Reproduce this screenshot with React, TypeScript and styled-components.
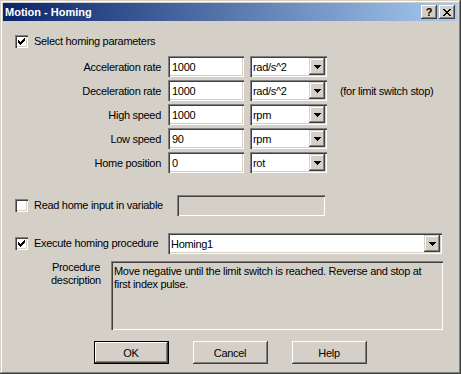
import React from 'react';
import styled, { createGlobalStyle } from 'styled-components';

const Global = createGlobalStyle`
  html, body { margin: 0; padding: 0; background: #D4D0C8; }
  body { font-family: "Liberation Sans", Arial, sans-serif; font-size: 11px; letter-spacing: -0.3px; color: #000; }
`;

const sunken = `box-shadow: inset 1px 1px #808080, inset 2px 2px #404040, inset -1px -1px #FFFFFF, inset -2px -2px #D4D0C8;`;
const raised = `box-shadow: inset -1px -1px #404040, inset 1px 1px #D4D0C8, inset -2px -2px #808080, inset 2px 2px #FFFFFF;`;

const Window = styled.div`
  box-sizing: border-box;
  width: 461px;
  height: 374px;
  padding: 3px 4px 4px 3px;
  background: #D4D0C8;
  ${raised}
  display: flex;
  flex-direction: column;
`;

const TitleBar = styled.div`
  height: 18px;
  display: flex;
  align-items: center;
  justify-content: space-between;
  background: linear-gradient(to right, #0A246A, #A6CAF0);
  padding: 0 2px 0 2px;
`;

const Title = styled.span`
  color: #fff;
  font-weight: bold;
  font-size: 11px;
  letter-spacing: 0;
  line-height: 13px;
`;

const CaptionButtons = styled.div`
  display: flex;
  gap: 2px;
`;

const CaptionButton = styled.div`
  box-sizing: border-box;
  width: 16px;
  height: 14px;
  background: #D4D0C8;
  box-shadow: inset -1px -1px #404040, inset 1px 1px #FFFFFF, inset -2px -2px #808080, inset 2px 2px #D4D0C8;
  display: flex;
  align-items: center;
  justify-content: center;
  font-weight: bold;
  font-size: 11px;
  line-height: 11px;
`;

const Client = styled.div`
  flex: 1;
  display: flex;
  flex-direction: column;
  padding: 0 12px;
`;

const CheckRow = styled.div<{ $top: number }>`
  display: flex;
  align-items: center;
  margin-top: ${p => p.$top}px;
  min-height: 13px;
`;

const Box = styled.span`
  box-sizing: border-box;
  width: 13px;
  height: 13px;
  flex: none;
  background: #fff;
  ${sunken}
  display: block;
`;

const CheckLabel = styled.span<{ $width?: number }>`
  margin-left: 6px;
  line-height: 13px;
  white-space: nowrap;
  ${p => (p.$width ? `width: ${p.$width}px; flex: none;` : '')}
`;

const ParamGrid = styled.div`
  display: grid;
  grid-template-columns: 153px 82px 90px 1fr;
  grid-auto-rows: 21px;
  row-gap: 3px;
  margin-top: 8px;
  align-items: center;
`;

const ParamLabel = styled.span`
  text-align: right;
  padding-right: 7px;
  white-space: nowrap;
`;

const TextBox = styled.div<{ $width: number; $disabled?: boolean }>`
  box-sizing: border-box;
  width: ${p => p.$width}px;
  height: 21px;
  background: ${p => (p.$disabled ? '#D4D0C8' : '#FFFFFF')};
  ${sunken}
  padding: 2px 2px 2px 4px;
  display: flex;
  align-items: center;
  white-space: nowrap;
`;

const Combo = styled.div<{ $width: number }>`
  box-sizing: border-box;
  width: ${p => p.$width}px;
  height: 21px;
  background: #fff;
  ${sunken}
  padding: 2px;
  display: flex;
  align-items: center;
`;

const ComboText = styled.span`
  flex: 1;
  padding-left: 1px;
  white-space: nowrap;
`;

const ArrowButton = styled.span`
  box-sizing: border-box;
  width: 16px;
  height: 17px;
  flex: none;
  background: #D4D0C8;
  ${raised}
  display: flex;
  align-items: center;
  justify-content: center;
`;

const Note = styled.span`
  white-space: nowrap;
`;

const DescRow = styled.div`
  display: flex;
  align-items: flex-start;
  margin-top: 7px;
  padding-left: 26px;
`;

const DescLabel = styled.span`
  width: 70px;
  flex: none;
  text-align: center;
  line-height: 13px;
`;

const DescBox = styled.div`
  box-sizing: border-box;
  width: 332px;
  height: 69px;
  background: #D4D0C8;
  ${sunken}
  padding: 4px 3px;
  line-height: 13px;
`;

const ButtonRow = styled.div`
  display: flex;
  justify-content: center;
  gap: 24px;
  margin-top: 11px;
`;

const PushButton = styled.div<{ $default?: boolean }>`
  box-sizing: border-box;
  width: 75px;
  height: 23px;
  background: #D4D0C8;
  display: flex;
  align-items: center;
  justify-content: center;
  ${p =>
    p.$default
      ? 'box-shadow: inset 0 0 0 1px #000000, inset -2px -2px #404040, inset 2px 2px #FFFFFF, inset -3px -3px #808080;'
      : 'box-shadow: inset -1px -1px #404040, inset 1px 1px #FFFFFF, inset -2px -2px #808080, inset 2px 2px #D4D0C8;'}
`;

const Tick = () => (
  <svg width="13" height="13" viewBox="0 0 13 13" shapeRendering="crispEdges" style={{ display: 'block' }}>
    <path
      d="M3 5h1v3h-1zM4 6h1v3h-1zM5 7h1v3h-1zM6 6h1v3h-1zM7 5h1v3h-1zM8 4h1v3h-1zM9 3h1v3h-1z"
      fill="#000"
    />
  </svg>
);

const CheckBox = ({ checked }: { checked?: boolean }) => <Box>{checked && <Tick />}</Box>;

const Arrow = () => (
  <svg width="7" height="4" viewBox="0 0 7 4" shapeRendering="crispEdges" style={{ display: 'block' }}>
    <path d="M0 0h7v1h-1v1h-1v1h-1v1h-1v-1h-1v-1h-1v-1h-1z" fill="#000" />
  </svg>
);

const ComboBox = ({ value, width }: { value: string; width: number }) => (
  <Combo $width={width}>
    <ComboText>{value}</ComboText>
    <ArrowButton>
      <Arrow />
    </ArrowButton>
  </Combo>
);

const CloseGlyph = () => (
  <svg width="8" height="7" viewBox="0 0 8 7" shapeRendering="crispEdges" style={{ display: 'block' }}>
    <path
      d="M0 0h2v1h-2zM6 0h2v1h-2zM1 1h2v1h-2zM5 1h2v1h-2zM2 2h4v1h-4zM3 3h2v1h-2zM2 4h4v1h-4zM1 5h2v1h-2zM5 5h2v1h-2zM0 6h2v1h-2zM6 6h2v1h-2z"
      fill="#000"
    />
  </svg>
);

const params = [
  { label: 'Acceleration rate', value: '1000', unit: 'rad/s^2', note: '' },
  { label: 'Deceleration rate', value: '1000', unit: 'rad/s^2', note: '(for limit switch stop)' },
  { label: 'High speed', value: '1000', unit: 'rpm', note: '' },
  { label: 'Low speed', value: '90', unit: 'rpm', note: '' },
  { label: 'Home position', value: '0', unit: 'rot', note: '' },
];

export default function App() {
  return (
    <>
      <Global />
      <Window>
        <TitleBar>
          <Title>Motion - Homing</Title>
          <CaptionButtons>
            <CaptionButton>?</CaptionButton>
            <CaptionButton>
              <CloseGlyph />
            </CaptionButton>
          </CaptionButtons>
        </TitleBar>
        <Client>
          <CheckRow $top={14}>
            <CheckBox checked />
            <CheckLabel>Select homing parameters</CheckLabel>
          </CheckRow>
          <ParamGrid>
            {params.map(p => (
              <React.Fragment key={p.label}>
                <ParamLabel>{p.label}</ParamLabel>
                <TextBox $width={76}>{p.value}</TextBox>
                <ComboBox value={p.unit} width={77} />
                <Note>{p.note}</Note>
              </React.Fragment>
            ))}
          </ParamGrid>
          <CheckRow $top={22}>
            <CheckBox />
            <CheckLabel $width={143}>Read home input in variable</CheckLabel>
            <TextBox $width={148} $disabled />
          </CheckRow>
          <CheckRow $top={17}>
            <CheckBox checked />
            <CheckLabel $width={134}>Execute homing procedure</CheckLabel>
            <ComboBox value="Homing1" width={274} />
          </CheckRow>
          <DescRow>
            <DescLabel>
              Procedure
              <br />
              description
            </DescLabel>
            <DescBox>
              Move negative until the limit switch is reached. Reverse and stop at first index pulse.
            </DescBox>
          </DescRow>
          <ButtonRow>
            <PushButton $default>OK</PushButton>
            <PushButton>Cancel</PushButton>
            <PushButton>Help</PushButton>
          </ButtonRow>
        </Client>
      </Window>
    </>
  );
}
